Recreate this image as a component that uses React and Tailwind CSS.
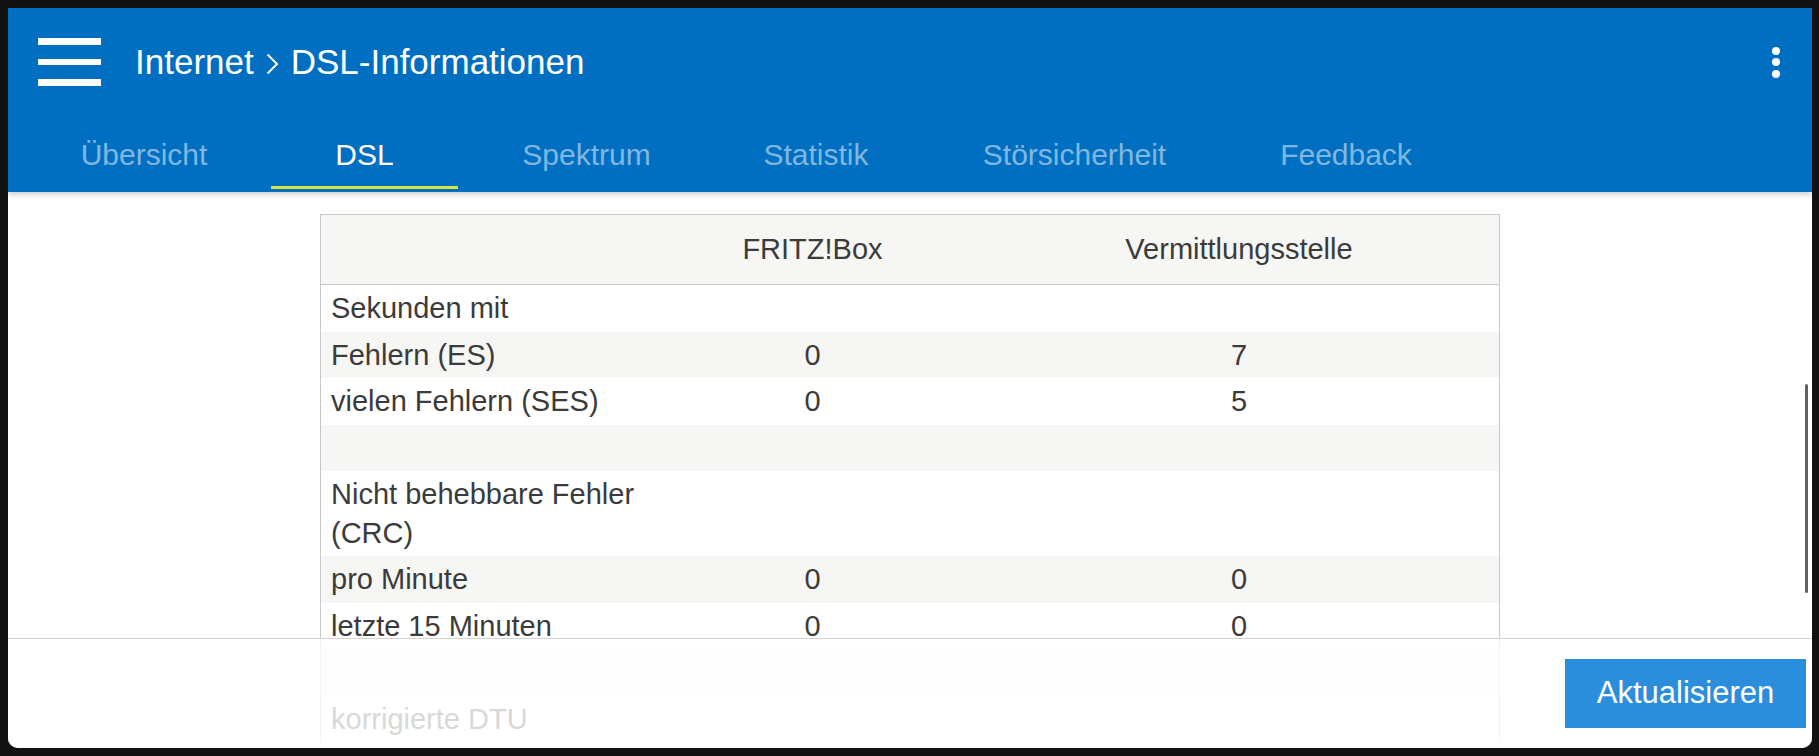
import React from 'react';

const tabs = [
    { label: 'Übersicht', w: 'w-[254px]' },
    { label: 'DSL', w: 'w-[187px]', active: true },
    { label: 'Spektrum', w: 'w-[257px]' },
    { label: 'Statistik', w: 'w-[202px]' },
    { label: 'Störsicherheit', w: 'w-[315px]' },
    { label: 'Feedback', w: 'w-[228px]' },
];

const rows = [
    { label: 'Sekunden mit' },
    { label: 'Fehlern (ES)', box: '0', vst: '7' },
    { label: 'vielen Fehlern (SES)', box: '0', vst: '5' },
    { label: '' },
    { label: 'Nicht behebbare Fehler', label2: '(CRC)' },
    { label: 'pro Minute', box: '0', vst: '0' },
    { label: 'letzte 15 Minuten', box: '0', vst: '0' },
    { label: '' },
    { label: 'korrigierte DTU' },
];

export default function App() {
    return (
        <div className="w-[1819px] h-[756px] bg-[#121212] pt-[8px] pl-[8px] overflow-hidden font-['Liberation_Sans',Arial,sans-serif]">
            <div className="w-[1804px] h-[740px] bg-white rounded-b-[10px] overflow-hidden flex flex-col relative">
                {/* Header */}
                <div className="bg-[#006fc1] relative z-10 shadow-[0_2px_6px_rgba(0,0,0,0.22)] pb-[3px]">
                    <div className="h-[108px] flex items-center pl-[30px] pr-[32px]">
                        <div className="w-[63px] flex flex-col gap-[14px]">
                            <span className="block h-[6.5px] bg-white" />
                            <span className="block h-[6.5px] bg-white" />
                            <span className="block h-[6.5px] bg-white" />
                        </div>
                        <h1 className="ml-[34px] text-white text-[35px] leading-[40px] flex items-center">
                            Internet
                            <svg width="13" height="22" viewBox="0 0 13 22" className="mx-[12px] mt-[4px]" fill="none" stroke="white" strokeWidth="2">
                                <path d="M1.5 1.5 L11 11 L1.5 20.5" />
                            </svg>
                            DSL-Informationen
                        </h1>
                        <div className="ml-auto flex flex-col gap-[3.5px]">
                            <span className="block w-[8px] h-[8px] rounded-full bg-white" />
                            <span className="block w-[8px] h-[8px] rounded-full bg-white" />
                            <span className="block w-[8px] h-[8px] rounded-full bg-white" />
                        </div>
                    </div>
                    <div className="flex pl-[9px]">
                        {tabs.map((t) => (
                            <div
                                key={t.label}
                                className={`${t.w} text-center text-[30px] leading-[34px] pt-[22px] pb-[14px] border-b-[3px] ${t.active ? 'text-white border-[#d4e63b]' : 'text-white/50 border-transparent'}`}
                            >
                                {t.label}
                            </div>
                        ))}
                    </div>
                </div>

                {/* Content */}
                <div className="flex-1 overflow-hidden pt-[22px]">
                    <div className="w-[1180px] mx-auto border border-b-0 border-[#c8c8c8] text-[#3b3b3b] text-[29px]">
                        <div className="grid grid-cols-[325px_333px_1fr] h-[70px] items-center bg-[#f6f6f4] border-b border-[#c8c8c8]">
                            <div />
                            <div className="text-center">FRITZ!Box</div>
                            <div className="text-center">Vermittlungsstelle</div>
                        </div>
                        {rows.map((r, i) => (
                            <div
                                key={i}
                                className={`grid grid-cols-[325px_333px_1fr] py-[4px] leading-[38.5px] ${i % 2 === 1 ? 'bg-[#f6f6f4]' : 'bg-white'}`}
                            >
                                <div className="pl-[10px]">
                                    {r.label || '\u00a0'}
                                    {r.label2 && <br />}
                                    {r.label2}
                                </div>
                                <div className="text-center">{r.box}</div>
                                <div className="text-center">{r.vst}</div>
                            </div>
                        ))}
                    </div>
                </div>

                {/* Scrollbar thumb */}
                <div className="absolute right-[4px] top-[376px] w-[3px] h-[209px] rounded-full bg-[#606060]" />

                {/* Footer */}
                <div className="absolute left-0 right-0 bottom-0 h-[110px] bg-white/80 border-t border-[#d2d2d2] flex items-center justify-end pr-[6px]">
                    <button className="w-[241px] h-[69px] bg-[#2b8edc] text-white text-[31px]">
                        Aktualisieren
                    </button>
                </div>
            </div>
        </div>
    );
}
